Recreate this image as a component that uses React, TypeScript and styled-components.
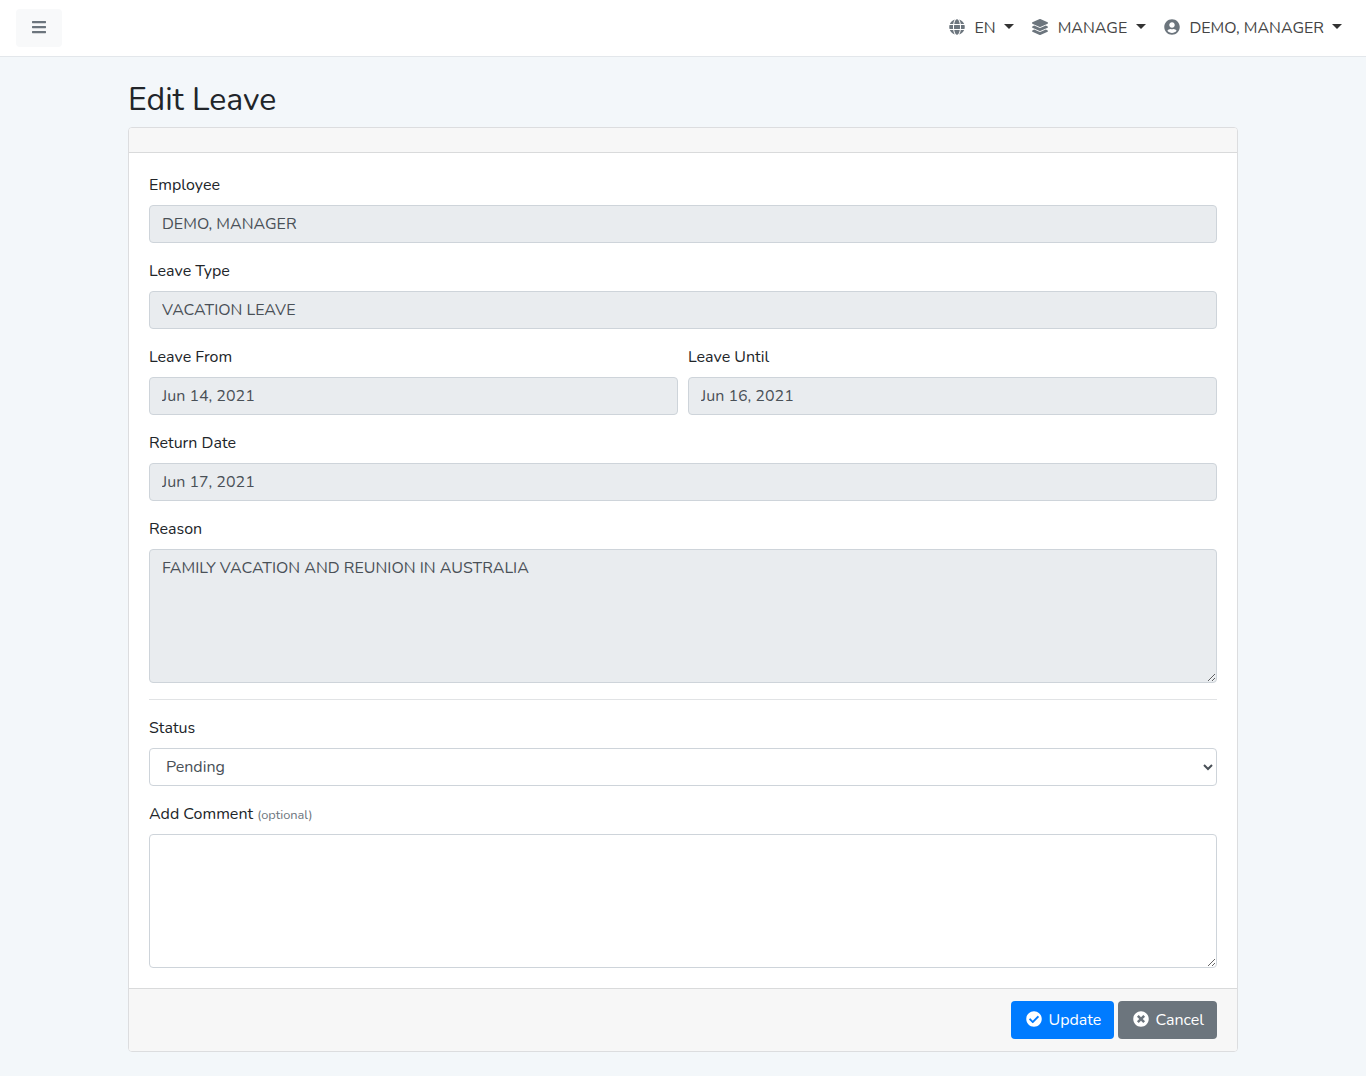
import React from "react";
import styled, { createGlobalStyle } from "styled-components";
import { FaBars, FaGlobe, FaLayerGroup, FaUserCircle, FaCheckCircle, FaTimesCircle } from "react-icons/fa";

const GlobalStyle = createGlobalStyle`
  *, *::before, *::after { box-sizing: border-box; }
  body {
    margin: 0;
    background: #f3f7fa;
    color: #212529;
    font-family: Nunito, Lato, sans-serif;
    font-size: 16px;
    line-height: 24px;
  }
`;

const Page = styled.div`
  min-height: 1076px;
`;

const TopBar = styled.header`
  display: flex;
  align-items: center;
  justify-content: space-between;
  height: 57px;
  padding: 0 24px 1px 16px;
  background: #fff;
  border-bottom: 1px solid #e3e7eb;
`;

const MenuButton = styled.button`
  display: flex;
  align-items: center;
  justify-content: center;
  width: 46px;
  height: 38px;
  padding: 0 0 2px;
  border: 0;
  border-radius: 4px;
  background: #f8f9fa;
  color: #6c757d;
  font-size: 16px;
`;

const Nav = styled.nav`
  display: flex;
  gap: 18px;
`;

const NavItem = styled.a`
  display: flex;
  align-items: center;
  color: #444;
  svg {
    margin-bottom: 2px;
    color: #6c757d;
  }
  &::after {
    content: "";
    margin: -3px 0 0 7.6px;
    border: 5px solid transparent;
    border-top-color: #333;
    border-bottom: 0;
  }
`;

const NavText = styled.span<{ $width: number }>`
  margin-left: 9.6px;
  width: ${(p) => p.$width}px;
  white-space: nowrap;
`;

const Main = styled.main`
  width: 1110px;
  margin: 0 auto;
  padding-top: 24px;
`;

const Title = styled.h2`
  margin: 0 0 8px;
  font-size: 32px;
  font-weight: 400;
  line-height: 38px;
`;

const Card = styled.section`
  border: 1px solid #dcdddf;
  border-radius: 4px;
  background: #fff;
  overflow: hidden;
`;

const CardHeader = styled.div`
  height: 25px;
  background: #f7f7f7;
  border-bottom: 1px solid #d9dadb;
`;

const CardBody = styled.div`
  padding: 20px;
`;

const CardFooter = styled.footer`
  display: flex;
  justify-content: flex-end;
  gap: 4px;
  padding: 12px 20px;
  background: #f7f7f7;
  border-top: 1px solid #d9dadb;
`;

const Row = styled.div`
  display: grid;
  grid-template-columns: 1fr 1fr;
  gap: 10px;
`;

const Group = styled.div<{ $last?: boolean }>`
  margin-bottom: ${(p) => (p.$last ? 0 : 16)}px;
`;

const Label = styled.label`
  display: block;
  margin-bottom: 8px;
`;

const Optional = styled.small`
  font-size: 12.8px;
  line-height: 1;
  color: #6c757d;
`;

const Input = styled.input`
  display: block;
  width: 100%;
  height: 38px;
  padding: 6px 12px;
  border: 1px solid #ced4da;
  border-radius: 4px;
  background: #e9ecef;
  color: #495057;
  font: inherit;
  outline: 0;
`;

const TextArea = styled.textarea`
  display: block;
  width: 100%;
  height: 134px;
  padding: 6px 12px;
  border: 1px solid #ced4da;
  border-radius: 4px;
  background: ${(p) => (p.readOnly ? "#e9ecef" : "#fff")};
  color: #495057;
  font: inherit;
  outline: 0;
  resize: vertical;
`;

const Select = styled.select`
  display: block;
  width: 100%;
  height: 38px;
  padding: 6px 12px;
  border: 1px solid #ced4da;
  border-radius: 4px;
  background: #fff;
  color: #495057;
  font: inherit;
`;

const Divider = styled.hr`
  margin: 16px 0;
  border: 0;
  border-top: 1px solid #e1e3e5;
`;

const Button = styled.button<{ $color: string; $width: number }>`
  display: flex;
  align-items: center;
  width: ${(p) => p.$width}px;
  height: 38px;
  padding: 0 0 0 15.3px;
  border: 0;
  border-radius: 4px;
  background: ${(p) => p.$color};
  color: #fff;
  font: inherit;
  gap: 6.2px;
  white-space: nowrap;
  svg { margin-bottom: 2px; }
`;

const App = () => (
  <Page>
    <GlobalStyle />
    <TopBar>
      <MenuButton aria-label="Menu"><FaBars /></MenuButton>
      <Nav>
        <NavItem><FaGlobe /><NavText $width={22}>EN</NavText></NavItem>
        <NavItem><FaLayerGroup /><NavText $width={70.6}>MANAGE</NavText></NavItem>
        <NavItem><FaUserCircle /><NavText $width={135}>DEMO, MANAGER</NavText></NavItem>
      </Nav>
    </TopBar>
    <Main>
      <Title>Edit Leave</Title>
      <Card>
        <CardHeader />
        <CardBody>
          <Group><Label>Employee</Label><Input readOnly value="DEMO, MANAGER" /></Group>
          <Group><Label>Leave Type</Label><Input readOnly value="VACATION LEAVE" /></Group>
          <Row>
            <Group><Label>Leave From</Label><Input readOnly value="Jun 14, 2021" /></Group>
            <Group><Label>Leave Until</Label><Input readOnly value="Jun 16, 2021" /></Group>
          </Row>
          <Group><Label>Return Date</Label><Input readOnly value="Jun 17, 2021" /></Group>
          <Group><Label>Reason</Label><TextArea readOnly value="FAMILY VACATION AND REUNION IN AUSTRALIA" /></Group>
          <Divider />
          <Group><Label>Status</Label><Select><option>Pending</option></Select></Group>
          <Group $last><Label>Add Comment <Optional>(optional)</Optional></Label><TextArea /></Group>
        </CardBody>
        <CardFooter>
          <Button $color="#007bff" $width={103}><FaCheckCircle />Update</Button>
          <Button $color="#6c757d" $width={99}><FaTimesCircle />Cancel</Button>
        </CardFooter>
      </Card>
    </Main>
  </Page>
);

export default App;
